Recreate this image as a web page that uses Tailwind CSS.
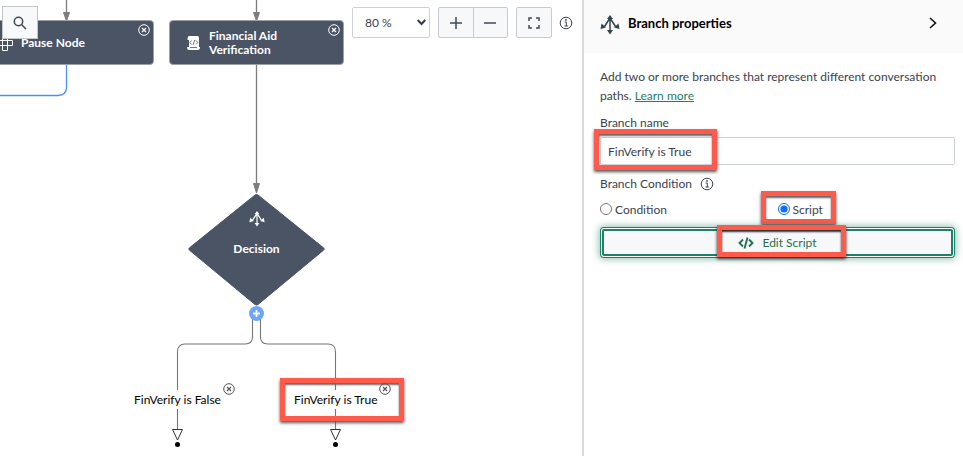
<!DOCTYPE html>
<html lang="en">
<head>
<meta charset="utf-8">
<title>Branch properties</title>
<script src="https://cdn.jsdelivr.net/npm/@tailwindcss/browser@4"></script>
</head>
<body class="flex min-h-screen bg-white font-[Lato,'Open_Sans',sans-serif] text-xs text-[#3a4250]">
<svg class="hidden">
  <symbol id="branch" viewBox="0 0 20 20">
    <path d="M10 3v12M10 3L4.500 11.500M10 3L15.500 11.500" fill="none" stroke="currentColor" stroke-width="1.500"/>
    <path d="M10 0L13 4H7ZM10 19.500L7 15H13ZM.5 14L1.500 8.500L6 12.500ZM19.500 14L18.500 8.500L14 12.500Z" fill="currentColor"/>
  </symbol>
  <symbol id="close" viewBox="0 0 12 12">
    <circle cx="6" cy="6" r="5.300" fill="none" stroke="currentColor"/>
    <path d="M4 4L8 8M8 4L4 8" stroke="currentColor" stroke-width="1.200"/>
  </symbol>
  <symbol id="info" viewBox="0 0 14 14">
    <circle cx="7" cy="7" r="5.800" fill="none" stroke="currentColor"/>
    <path d="M5.700 6H7.300V10M5.500 10H8.900" fill="none" stroke="currentColor"/>
    <circle cx="7" cy="3.900" r=".9" fill="currentColor"/>
  </symbol>
</svg>

<main class="relative min-w-0 flex-1 overflow-hidden">
  <svg class="absolute left-0 top-0" width="582" height="456" fill="none" stroke="#7d7d7d" stroke-width="1.300">
    <path d="M66.500 0V14M256.500 0V14M256.500 64V184"/>
    <path d="M63.500 12.500h6L66.500 21zM253.500 12.500h6L256.500 21zM253.500 183.500h6L256.500 193z" fill="#7d7d7d" stroke="#7d7d7d" stroke-width="1"/>
    <path d="M66.500 64V87Q66.500 95.500 58 95.500H0" stroke="#4a90f5"/>
    <path d="M252.500 318V337Q252.500 344 245 344H185Q177.500 344 177.500 352V390M177.500 409V429M260.500 318V337Q260.500 344 268 344H328Q335.500 344 335.500 352V390M335.500 409V429" stroke="#777" stroke-width="1.100"/>
    <path d="M172.500 429.500h10L177.500 440zM330.500 429.500h10L335.500 440z" stroke="#333" stroke-width="1"/>
    <circle cx="177.500" cy="444.500" r="2.500" fill="#000" stroke="none"/>
    <circle cx="335.500" cy="444.500" r="2.500" fill="#000" stroke="none"/>
    <path d="M255 195Q256.500 193.800 258 195L323.500 247.800Q325 249 323.500 250.200L258 304.500Q256.500 305.500 255 304.500L189.500 250.200Q188 249 189.500 247.800Z" fill="#4a5465" stroke="#4a5465" stroke-width="1"/>
  </svg>

  <div class="absolute -left-6 top-5 flex h-[45px] w-[178px] items-center rounded-sm border border-[#9aa1ab] bg-[#4a5465] pl-5 font-bold leading-[14px] text-white">
    <svg class="size-4" viewBox="0 0 16 16" fill="none" stroke="#fff"><path d="M5.500 .5h5v15h-5zM.5 5.500h15v5H.5z"/></svg>
    <span class="ml-2">Pause Node</span>
    <button aria-label="Remove Pause Node" class="absolute right-[3px] top-[3px]"><svg class="size-3"><use href="#close"/></svg></button>
  </div>
  <div class="absolute left-[169px] top-5 flex h-[45px] w-[175px] items-center rounded-sm border border-[#9aa1ab] bg-[#4a5465] pl-4 font-bold leading-[14px] text-white">
    <svg class="size-4" viewBox="0 0 16 16">
      <path d="M3 1H11.500Q13 1 13 3V12H14Q14 15 12 15H3Q1 15 1 12H3V5H1.500Q1.500 1 3 1Z" fill="#fff"/>
      <path d="M5.500 5.500L3.900 7.500L5.500 9.500M10 5.500L11.700 7.500L10 9.500M8.700 5L7 10M4 12.500H11" fill="none" stroke="#4a5465" stroke-width=".8"/>
    </svg>
    <span class="ml-[7px] w-24">Financial Aid Verification</span>
    <button aria-label="Remove Financial Aid Verification" class="absolute right-[3px] top-[3px]"><svg class="size-3"><use href="#close"/></svg></button>
  </div>

  <div class="absolute left-[188px] top-[211px] flex w-[137px] flex-col items-center gap-3 font-bold text-white">
    <svg class="size-4"><use href="#branch"/></svg>
    <span class="leading-5">Decision</span>
  </div>
  <button aria-label="Add branch" class="absolute left-[249px] top-[306px] flex size-[15px] items-center justify-center rounded-full bg-[#6ba6fb]">
    <svg class="size-[7px]" viewBox="0 0 7 7"><path d="M3.500 0V7M0 3.500H7" stroke="#fff" stroke-width="1.800"/></svg>
  </button>

  <div class="absolute left-[134px] top-[391px] leading-[18px] text-black">FinVerify is False</div>
  <button aria-label="Remove FinVerify is False" class="absolute left-[223px] top-[383px] text-[#555]"><svg class="size-3"><use href="#close"/></svg></button>
  <div class="absolute left-[294px] top-[391px] leading-[18px] text-black">FinVerify is True</div>
  <div class="pointer-events-none absolute left-[280px] top-[378px] h-[43px] w-[124px] border-5 border-[#ff5a4c] shadow-[0_2px_3px_#555,inset_0_2px_2px_#666]"></div>
  <button aria-label="Remove FinVerify is True" class="absolute left-[379px] top-[383px] text-[#555]"><svg class="size-3"><use href="#close"/></svg></button>

  <button aria-label="Search" class="absolute left-[2px] top-[6px] flex h-[33px] w-9 items-center justify-center border border-[#c4c6c9] bg-[#f8f9fb]">
    <svg class="size-[14px]" viewBox="0 0 14 14" fill="none" stroke="#3f4854" stroke-width="1.500"><circle cx="5.500" cy="5.500" r="4.200"/><path d="M8.700 8.700L13 13"/></svg>
  </button>

  <div class="absolute left-[352px] top-[7px] flex items-center">
    <div class="relative">
      <select aria-label="Zoom level" class="h-[31px] w-[78px] appearance-none rounded-xs border border-[#ccd2d8] bg-white pl-3"><option>80 %</option></select>
      <svg class="pointer-events-none absolute right-1 top-3 h-[7px] w-[9px]" viewBox="0 0 9 7" fill="none" stroke="#333b46" stroke-width="2"><path d="M.7 1L4.500 5L8.300 1"/></svg>
    </div>
    <div class="ml-2 flex h-[31px] w-[70px] divide-x divide-[#c8ccd1] rounded-xs border border-[#c8ccd1] bg-[#f7f8fa]">
      <button aria-label="Zoom in" class="flex flex-1 items-center justify-center"><svg class="size-3" viewBox="0 0 12 12"><path d="M6 0V12M0 6H12" stroke="#3f4854" stroke-width="1.500"/></svg></button>
      <button aria-label="Zoom out" class="flex flex-1 items-center justify-center"><svg class="size-3" viewBox="0 0 12 12"><path d="M0 6H12" stroke="#3f4854" stroke-width="1.500"/></svg></button>
    </div>
    <button aria-label="Fit to screen" class="ml-2 flex h-[31px] w-9 items-center justify-center rounded-xs border border-[#c8ccd1] bg-[#f7f8fa]">
      <svg class="size-3" viewBox="0 0 12 12" fill="none" stroke="#3f4854" stroke-width="1.500"><path d="M1 4V1H4M8 1H11V4M11 8V11H8M4 11H1V8"/></svg>
    </button>
    <button aria-label="Zoom help" class="ml-[7px]"><svg class="size-[14px]"><use href="#info"/></svg></button>
  </div>
</main>

<aside class="w-[381px] shrink-0 border-l-2 border-[#dcdcdc] bg-white leading-[19px]">
  <header class="flex h-[53px] items-center bg-[#fafafa] pb-[7px] pl-4 pr-[26px] text-black">
    <svg class="mt-1 size-5 text-[#2e444e]"><use href="#branch"/></svg>
    <h2 class="ml-2 flex-1 text-[13px] font-bold">Branch properties</h2>
    <button aria-label="Collapse panel"><svg class="h-3 w-2" viewBox="0 0 8 12" fill="none" stroke="#111" stroke-width="1.600"><path d="M1 1L6.500 6L1 11"/></svg></button>
  </header>
  <form class="flex flex-col pb-4 pl-4 pr-2 pt-[14px]">
    <p>Add two or more branches that represent different conversation paths. <a href="#" class="text-[#1d8068] underline">Learn more</a></p>
    <label for="name" class="mt-2">Branch name</label>
    <div class="relative mt-[5px]">
      <input id="name" value="FinVerify is True" class="block h-7 w-full rounded-xs border border-[#ccd2d8] bg-white px-[7px]">
      <div class="pointer-events-none absolute -left-[6px] -top-2 h-[41px] w-[123px] border-5 border-[#ff5a4c] shadow-[0_2px_3px_#555,inset_0_2px_2px_#666]"></div>
    </div>
    <fieldset>
      <legend class="flex items-center gap-2 pt-[9px]">Branch Condition <svg class="size-[14px]"><use href="#info"/></svg></legend>
      <div class="mt-[6px] grid h-5 grid-cols-2 items-center">
        <label class="flex items-center gap-[3px]"><input type="radio" name="kind" class="size-3">Condition</label>
        <label class="relative flex items-center gap-[3px]"><input type="radio" name="kind" class="size-3 accent-[#0d6efd]" checked>Script
          <span class="pointer-events-none absolute -left-[17px] -top-[9px] h-[33px] w-[75px] border-5 border-[#ff5a4c] shadow-[0_2px_3px_#555,inset_0_2px_2px_#666]"></span>
        </label>
      </div>
    </fieldset>
    <div class="relative mt-2 p-[2px]">
      <button type="button" class="flex h-[27px] w-full items-center justify-center gap-2 rounded-xs border-2 border-[#1d8068] bg-[#f7f8fa] text-[#26704f] shadow-[0_0_0_1px_#fff,0_0_0_2px_#1d8068,0_0_7px_3px_#1d806880]">
        <svg class="h-3 w-4" viewBox="0 0 16 12" fill="none" stroke="currentColor" stroke-width="1.900"><path d="M5 2.500L1.500 6L5 9.500M11 2.500L14.500 6L11 9.500M9.500 .5L6.500 11.500"/></svg>
        Edit Script
      </button>
      <div class="pointer-events-none absolute -top-[2px] left-[117px] h-8 w-[129px] border-5 border-[#ff5a4c] shadow-[0_2px_3px_#333,inset_0_2px_2px_#333]"></div>
    </div>
  </form>
</aside>
</body>
</html>
